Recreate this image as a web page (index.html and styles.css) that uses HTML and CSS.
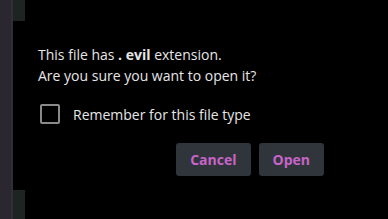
FILE: index.html
```html
<!DOCTYPE html>
<html lang="en">
<head>
    <meta charset="UTF-8">
    <title>Open file</title>
    <link rel="stylesheet" href="styles.css">
</head>
<body>
    <div class="side"></div>

    <!-- edge of the window behind the dialog -->
    <div class="edge">
        <div class="patch"></div>
        <div class="patch patch-bottom"></div>
    </div>

    <!-- confirm dialog -->
    <div class="dialog">
        <p class="msg">This file has <b>. evil</b> extension.<br>Are you sure you want to open it?</p>

        <label class="remember">
            <span class="box"></span>
            Remember for this file type
        </label>

        <div class="actions">
            <button class="btn">Cancel</button>
            <button class="btn">Open</button>
        </div>
    </div>
</body>
</html>
```

FILE: styles.css
```css
html, body {
    margin: 0;
    height: 100%;
}

body {
    display: flex;
    background-color: #2b2731;
    font-family: "Open Sans", sans-serif;
    color: #e6e6e6;
}

.side {
    width: 11px;
    border-right: 2px solid #322e38;
}

.edge {
    width: 12px;
    display: flex;
    flex-direction: column;
    justify-content: space-between;
    background-color: #000;
}

.patch {
    height: 21px;
    background-color: #1e2422;
}

.patch-bottom {
    height: 29px;
}

.dialog {
    flex: 1;
    background-color: #000;
    padding: 44px 0 0 13px;
}

.msg {
    margin: 0;
    font-size: 14px;
    line-height: 21px;
}

.msg b {
    font-weight: 700;
}

.remember {
    display: flex;
    align-items: center;
    gap: 13px;
    margin-top: 18px;
    font-size: 14px;
}

.box {
    width: 16px;
    height: 16px;
    border: 2px solid #8a8a8a;
    border-radius: 2px;
    margin-left: 2px;
}

.actions {
    display: flex;
    justify-content: flex-end;
    gap: 8px;
    margin-top: 19px;
    padding-right: 64px;
}

.btn {
    height: 33px;
    padding: 0 14px;
    border: none;
    border-radius: 3px;
    background-color: #30353b;
    color: #c864c8;
    font-family: "Open Sans", sans-serif;
    font-size: 14px;
    font-weight: 700;
}
```
